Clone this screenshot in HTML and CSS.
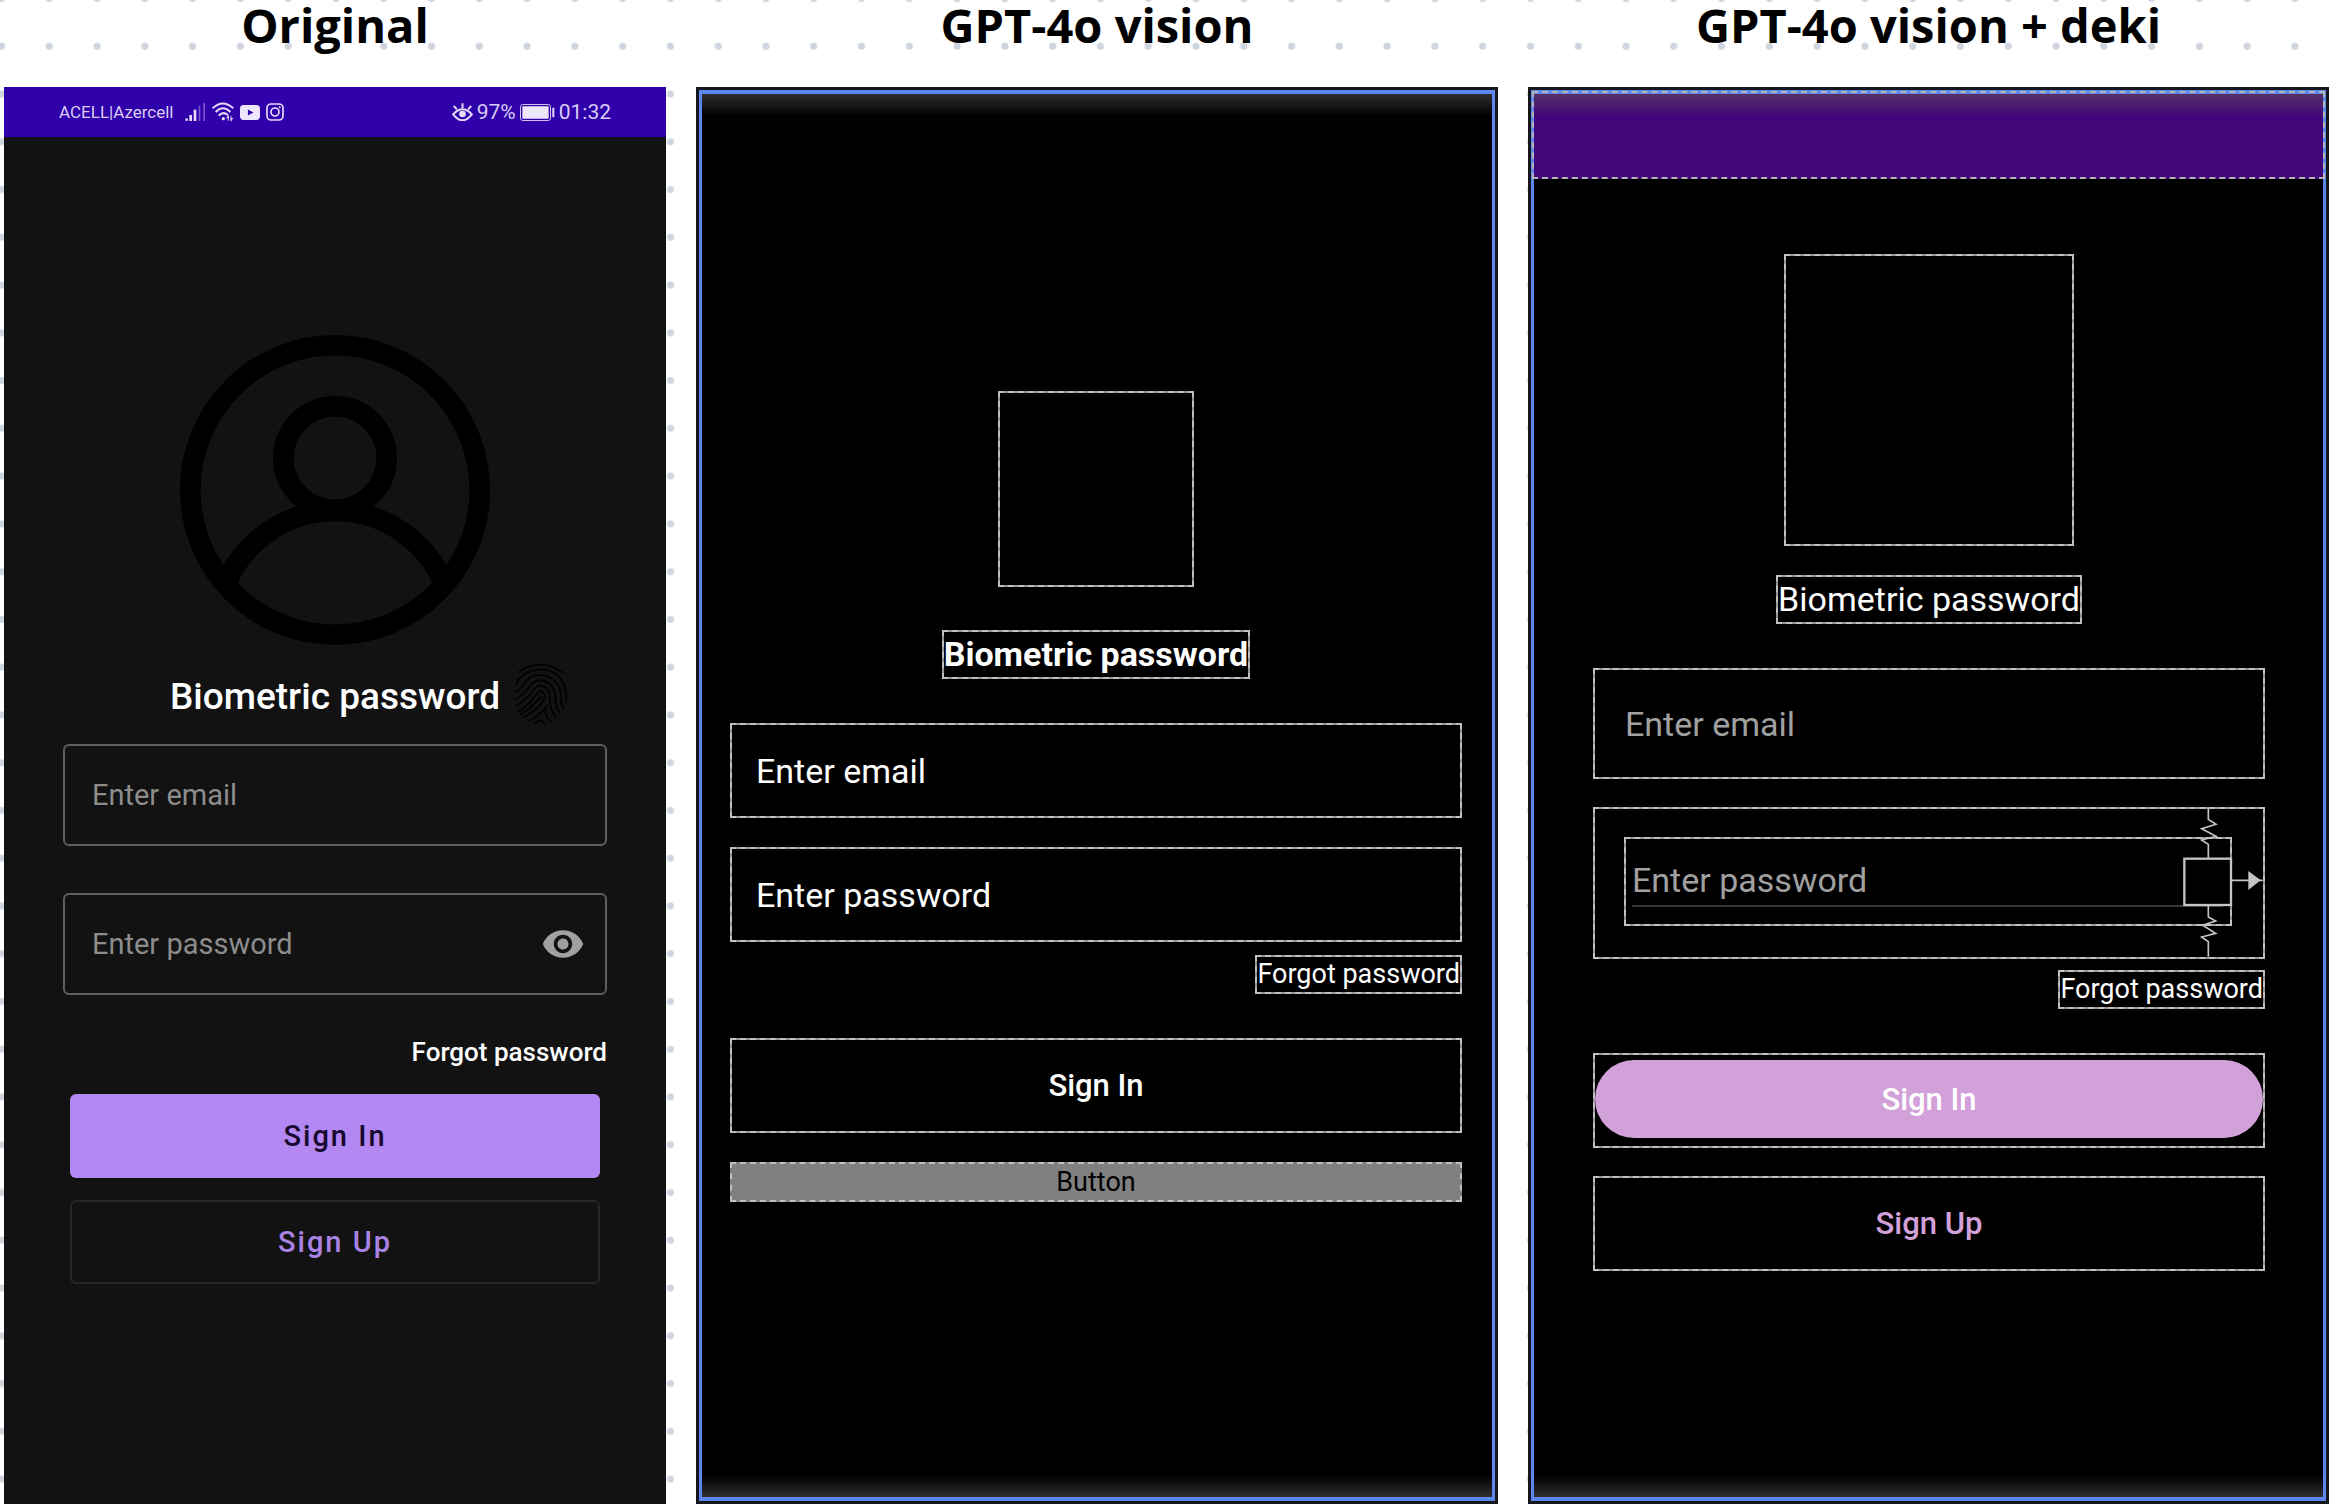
FILE: index.html
```html
<!DOCTYPE html>
<html lang="en">
<head>
<meta charset="utf-8">
<meta name="viewport" content="width=device-width, initial-scale=1">
<title>Sign-in screen comparison</title>
<link rel="stylesheet" href="styles.css">
</head>
<body>
<svg class="dots" aria-hidden="true">
  <defs>
    <pattern id="dot" x="-22.4" y="-25.5" width="47.78" height="47.76" patternUnits="userSpaceOnUse">
      <circle cx="23.9" cy="23.9" r="3.6" fill="#cfd5df"/>
    </pattern>
  </defs>
  <rect width="100%" height="100%" fill="url(#dot)"/>
</svg>

<main class="board">
  <section class="column">
    <h2 class="heading">Original</h2>
    <div class="phone">
      <div class="status">
        <span class="carrier">ACELL|Azercell</span>
        <span class="status-icons">
          <svg width="21" height="18" viewBox="0 0 63 54" fill="#e6dcfa">
            <circle cx="5" cy="50" r="4"/><rect x="13" y="36" width="8" height="18"/><rect x="26" y="20" width="8" height="34"/>
            <rect x="41" y="8" width="5" height="46" opacity=".4"/><rect x="55" y="0" width="5" height="54" opacity=".4"/>
          </svg>
          <svg width="22" height="20" viewBox="0 0 66 60" fill="none" stroke="#e6dcfa" stroke-width="6">
            <path d="M2 19Q32-10 64 19M11 30Q33 8 55 30M20 41Q33 27 48 39"/>
            <circle cx="34" cy="50" r="5" fill="#e6dcfa" stroke="none"/>
            <path d="M49 40v16M57 42v16" stroke-width="3"/><path d="M49 40l-7 9h7zM57 57l7-9h-7z" fill="#e6dcfa" stroke="none"/>
          </svg>
          <svg width="20" height="15" viewBox="0 0 61 45">
            <rect width="61" height="45" rx="11" fill="#eee6fc"/><path d="M24 13v19l17-9.500z" fill="#3000ab"/>
          </svg>
          <svg width="18" height="18" viewBox="0 0 54 54" fill="none" stroke="#e6dcfa" stroke-width="5">
            <rect x="3" y="3" width="48" height="48" rx="12"/><circle cx="27" cy="27" r="12"/><circle cx="41" cy="13" r="3" fill="#e6dcfa" stroke="none"/>
          </svg>
        </span>
        <span class="status-right">
          <svg width="21" height="18" viewBox="0 0 62 54" fill="none" stroke="#e6dcfa" stroke-width="6">
            <path d="M3 34Q31 4 59 34Q31 70 3 34z"/><circle cx="31" cy="33" r="10" fill="#e6dcfa" stroke="none"/>
            <path d="M5 9l9 10M31 1v14M57 9l-9 10"/>
          </svg>
          <span>97%</span>
          <svg class="battery" width="35" height="17" viewBox="0 0 105 51">
            <rect x="1.500" y="1.500" width="90" height="48" rx="7" fill="none" stroke="#cfc0ee" stroke-width="3"/>
            <rect x="7" y="7" width="79" height="37" rx="3" fill="#eee6fc"/><rect x="97" y="11" width="6" height="29" rx="2" fill="#e6dcfa"/>
          </svg>
          <span>01:32</span>
        </span>
      </div>
      <form class="phone-body">
        <svg class="avatar" viewBox="0 0 310 310" fill="none" stroke="#000" stroke-width="20.600">
          <circle cx="155" cy="155" r="144.700"/><circle cx="155" cy="123" r="51.700"/>
          <path d="M44 254A118 118 0 0 1 266 254"/>
        </svg>
        <div class="bio">
          <h3 class="bio-title">Biometric password</h3>
          <svg class="finger" width="54" height="62" viewBox="0 0 162 186" fill="none" stroke="#000" stroke-width="5" stroke-linecap="round">
            <path d="M16 26Q80-18 144 28"/>
            <path d="M6 62C30 14 112 0 146 56Q160 84 156 116"/>
            <path d="M4 88C34 74 28 36 80 36C124 38 142 76 140 104Q140 122 148 136"/>
            <path d="M4 108C50 88 42 52 80 52C112 54 126 82 124 108Q124 134 138 150"/>
            <path d="M6 128C58 102 54 68 80 68C102 70 110 92 108 112Q108 144 126 162"/>
            <path d="M12 146C64 114 66 84 80 84C96 88 96 106 82 122Q60 146 30 162"/>
            <path d="M80 100Q56 134 20 154M100 128Q84 152 46 174M94 146Q96 164 112 176M60 182Q78 162 92 182"/>
          </svg>
        </div>
        <input class="field" type="email" placeholder="Enter email" aria-label="Enter email">
        <div class="field-wrap">
          <input class="field" type="password" placeholder="Enter password" aria-label="Enter password">
          <button class="reveal" type="button" aria-label="Show password">
            <svg width="44" height="44" viewBox="0 0 24 24" fill="#a0a0a0"><path d="M12 4.500C7 4.500 2.730 7.610 1 12c1.730 4.390 6 7.500 11 7.500s9.270-3.110 11-7.500c-1.730-4.390-6-7.500-11-7.500zM12 17c-2.760 0-5-2.240-5-5s2.240-5 5-5 5 2.240 5 5-2.240 5-5 5zm0-8c-1.660 0-3 1.340-3 3s1.340 3 3 3 3-1.340 3-3-1.340-3-3-3z"/></svg>
          </button>
        </div>
        <a class="forgot" href="#">Forgot password</a>
        <button class="btn btn-primary" type="button">Sign In</button>
        <button class="btn btn-outline" type="button">Sign Up</button>
      </form>
    </div>
  </section>

  <section class="column">
    <h2 class="heading">GPT-4o vision</h2>
    <div class="canvas">
      <form class="device device-plain">
        <div class="frame image-small"></div>
        <h3 class="frame label label-bold">Biometric password</h3>
        <input class="frame entry" type="email" placeholder="Enter email" aria-label="Enter email">
        <input class="frame entry entry-second" type="password" placeholder="Enter password" aria-label="Enter password">
        <a class="frame link" href="#">Forgot password</a>
        <button class="frame action action-first" type="button">Sign In</button>
        <button class="frame action-gray" type="button">Button</button>
      </form>
    </div>
  </section>

  <section class="column">
    <h2 class="heading">GPT-4o vision + deki</h2>
    <div class="canvas">
      <div class="device device-deki">
        <div class="appbar"></div>
        <form class="deki-body">
          <div class="frame image-large"></div>
          <h3 class="frame label">Biometric password</h3>
          <input class="frame entry entry-tall" type="email" placeholder="Enter email" aria-label="Enter email">
          <div class="frame password-box">
            <div class="frame password-inner">
              <input class="password-input" type="password" placeholder="Enter password" aria-label="Enter password">
            </div>
            <svg class="springs" width="125" height="152" viewBox="0 48 375 456" fill="none" stroke="#c4c4c4" stroke-width="5">
              <rect x="133" y="203" width="140" height="139" stroke-width="7" fill="#000"/>
              <path d="M205 52V85L228 100L185 113L228 136L185 147L205 160V200M205 345V378L227 390L188 403L227 427L185 438L205 452V497M275 268H368"/>
              <path d="M325 240L362 268L325 297z" fill="#c4c4c4" stroke="none"/>
            </svg>
          </div>
          <a class="frame link" href="#">Forgot password</a>
          <div class="frame pill-frame"><button class="pill" type="button">Sign In</button></div>
          <button class="frame action action-pink" type="button">Sign Up</button>
        </form>
      </div>
    </div>
  </section>
</main>
</body>
</html>
```
FILE: styles.css
```css
* { box-sizing: border-box; }

body {
  margin: 0;
  background: #fff;
  color: #000;
  font-family: Roboto, "Liberation Sans", sans-serif;
}

h2, h3 { margin: 0; }

button, input { font: inherit; }

button { padding: 0; cursor: pointer; }

a { text-decoration: none; }

.dots {
  position: absolute;
  inset: 0;
  width: 100%;
  height: 100%;
  z-index: -1;
}

.board {
  display: grid;
  grid-template-columns: 662fr 802fr 801fr;
  gap: 30px;
  min-height: 100vh;
  padding: 0 5px 8px 4px;
}

.column {
  display: flex;
  flex-direction: column;
}

.heading {
  height: 87px;
  font: 700 47px/50px "Open Sans", sans-serif;
  text-align: center;
}

/* Phone screenshot */

.phone {
  flex: 1;
  background: #121212;
}

.status {
  display: flex;
  align-items: center;
  height: 50px;
  padding: 0 55px;
  background: #3000ab;
  color: #d9cdf5;
  font-size: 21px;
}

.carrier { font-size: 17px; }

.status-icons {
  display: flex;
  align-items: center;
  gap: 6px;
  margin-left: 12px;
}

.status-right {
  display: flex;
  align-items: center;
  gap: 4px;
  margin-left: auto;
}

.phone-body {
  display: flex;
  flex-direction: column;
  padding: 198px 59px 0;
}

.avatar {
  width: 310px;
  height: 310px;
  align-self: center;
}

.bio {
  display: grid;
  grid-template-columns: 1fr auto 1fr;
  align-items: center;
  margin: 18px 0 19px;
}

.bio-title {
  grid-column: 2;
  color: #fff;
  font-size: 37px;
  font-weight: 500;
  line-height: 42px;
  padding-top: 6px;
}

.finger { margin-left: 14px; }

.field {
  width: 100%;
  height: 102px;
  padding: 0 27px;
  border: 2px solid #5e5e5e;
  border-radius: 6px;
  background: transparent;
  color: #fff;
  font-size: 29px;
}

.field::placeholder { color: #8c8c8c; opacity: 1; }

.field-wrap {
  position: relative;
  margin-top: 47px;
}

.reveal {
  position: absolute;
  top: 29px;
  right: 22px;
  height: 44px;
  border: 0;
  background: none;
}

.forgot {
  align-self: flex-end;
  margin: 39px 0 24px;
  color: #fff;
  font-size: 26px;
  font-weight: 500;
  line-height: 36px;
}

.btn {
  height: 84px;
  margin: 0 7px 22px;
  border-radius: 6px;
  font-size: 29px;
  font-weight: 500;
  letter-spacing: 2px;
}

.btn-primary { border: 0; background: #b388f3; color: #170a2e; }

.btn-outline { border: 2px solid #272727; background: none; color: #a982e4; }

/* Layout editor previews */

.canvas {
  display: flex;
  flex: 1;
  border: 3px solid #15171c;
}

.device {
  flex: 1;
  border: 4px solid #5b87ef;
  border-width: 4px 3px;
  background:
    linear-gradient(#2f2f2f, transparent 22px) padding-box,
    linear-gradient(to top, #2f2f2f, transparent 22px) padding-box,
    #000;
}

.device-plain {
  display: flex;
  flex-direction: column;
  padding: 297px 30px 0 28px;
}

.frame {
  border: 2px dashed #c0c0c0;
  background:
    linear-gradient(#000, #000) padding-box,
    linear-gradient(#969696, #969696) border-box;
  color: #fff;
}

.image-small {
  width: 196px;
  height: 196px;
  align-self: center;
}

.image-large {
  width: 290px;
  height: 292px;
  align-self: center;
}

.label {
  align-self: center;
  margin: 43px 0 44px;
  font-size: 34px;
  font-weight: 400;
  line-height: 45px;
}

.label-bold { font-weight: 700; }

.entry {
  height: 95px;
  padding: 0 24px;
  font-size: 34px;
}

.entry::placeholder { color: #fff; opacity: 1; }

.entry-second { margin-top: 29px; }

.link {
  align-self: flex-end;
  margin: 13px 0 44px;
  font-size: 27px;
  line-height: 35px;
}

.action {
  height: 95px;
  font-size: 31px;
  font-weight: 500;
}

.action-gray {
  height: 40px;
  margin-top: 29px;
  background: #808080;
  color: #000;
  font-size: 27px;
}

.device-deki {
  display: flex;
  flex-direction: column;
}

.appbar {
  position: relative;
  height: 85px;
  background: linear-gradient(#553268, #42077a 22px);
}

.appbar::after {
  content: "";
  position: absolute;
  inset: -3px -2px 0;
  border: 2px dashed #b4b4b4;
}

.deki-body {
  display: flex;
  flex-direction: column;
  padding: 75px 58px 0 59px;
}

.deki-body .label { margin-top: 29px; }

.entry-tall {
  height: 111px;
  padding: 0 30px;
}

.entry-tall::placeholder,
.password-input::placeholder { color: #a0a0a0; opacity: 1; }

.password-box {
  position: relative;
  height: 152px;
  margin-top: 28px;
  padding: 28px 31px 31px 29px;
}

.password-inner {
  height: 89px;
  padding: 0 7px 17px 6px;
}

.password-input {
  width: 100%;
  height: 68px;
  padding: 16px 0 0;
  border: 0;
  border-bottom: 2px solid #3a3740;
  background: none;
  color: #fff;
  font-size: 34px;
}

.springs {
  position: absolute;
  top: -2px;
  right: -2px;
}

.deki-body .link { margin-top: 11px; }

.pill-frame {
  height: 95px;
  padding: 5px 0;
}

.pill {
  width: 100%;
  height: 78px;
  border: 0;
  border-radius: 39px;
  background: #d3a1d9;
  color: #fff;
  font-size: 31px;
  font-weight: 500;
}

.action-pink {
  margin-top: 28px;
  color: #d3a1d9;
}
```
